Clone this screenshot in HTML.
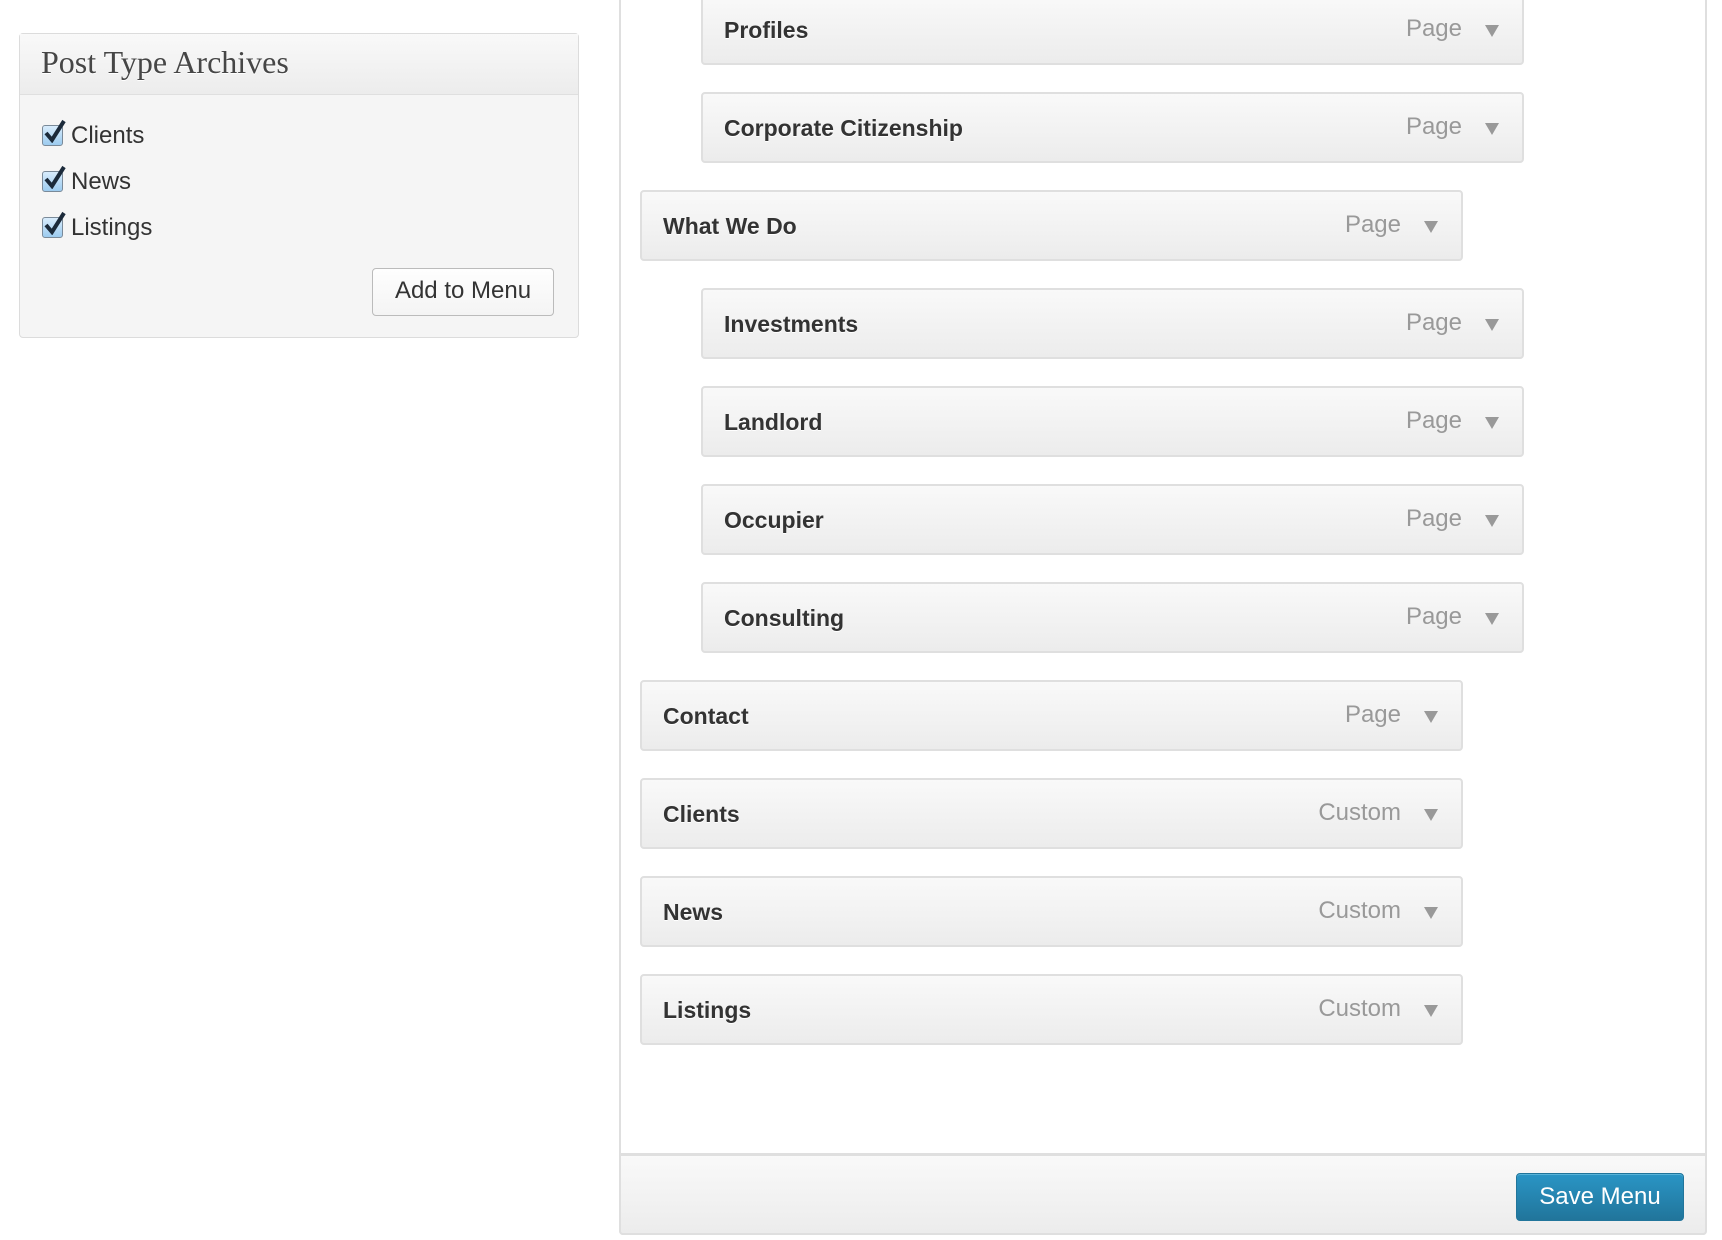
<!DOCTYPE html>
<html><head><meta charset="utf-8"><style>
*{box-sizing:border-box;margin:0;padding:0}
body{width:1722px;height:1240px;background:#fff;position:relative;overflow:hidden;font-family:"Liberation Sans",Arial,sans-serif}
.lp{position:absolute;left:19px;top:33px;width:560px;height:305px;border:1px solid #dcdcdc;border-radius:4px;background:#f5f5f5}
.lph{height:61px;border-bottom:1px solid #dfdfdf;background:linear-gradient(#f9f9f9,#ececec);font-family:"Liberation Serif",Georgia,serif;font-size:32px;color:#464646;padding:10px 0 0 21px;text-shadow:0 1px 0 #fff}
.cb{position:absolute;left:22px;font-size:24px;color:#333;height:24px;line-height:24px}
.cb i{position:absolute;left:0;top:1px;width:21px;height:21px;border:1px solid #7a8a99;border-radius:3px;background:linear-gradient(#d8ecfc,#9ccbef)}
.cb svg{position:absolute;left:2px;top:-5px}
.cb span{position:absolute;left:29px;top:0;white-space:nowrap}
.btn{position:absolute;left:352px;top:234px;width:182px;height:48px;border:1px solid #bbb;border-radius:4px;background:linear-gradient(#fefefe,#f4f4f4);font-size:24px;color:#333;text-align:center;line-height:44px}
.rp{position:absolute;left:619px;top:-5px;width:1088px;height:1240px;border:2px solid #dfdfdf;border-top:none;border-radius:0 0 4px 4px;background:#fff}
.ft{position:absolute;left:619px;top:1153px;width:1088px;height:82px;border:2px solid #dfdfdf;border-top:3px solid #dfdfdf;border-radius:0 0 4px 4px;background:linear-gradient(#f9f9f9,#ececec)}
.save{position:absolute;left:1516px;top:1173px;width:168px;height:48px;border:1px solid #21759b;border-radius:4px;background:linear-gradient(#2a95c5,#21759b);color:#fff;font-size:24px;text-align:center;line-height:46px;box-shadow:inset 0 1px 0 rgba(120,200,230,.6)}
.it{position:absolute;width:823px;height:71px;border:2px solid #dfdfdf;border-radius:4px;background:linear-gradient(#f9f9f9,#ececec)}
.it b{position:absolute;left:21px;top:21px;font-size:23px;color:#333;text-shadow:0 1px 0 #fff}
.it em{position:absolute;right:60px;top:19px;font-style:normal;font-size:24px;color:#999}
.it i{position:absolute;right:23px;top:29px;width:0;height:0;border-left:7px solid transparent;border-right:7px solid transparent;border-top:12px solid #999}
</style></head><body>
<div class="lp"><div class="lph">Post Type Archives</div>
<div class="cb" style="top:90px"><i></i><svg width="22" height="24" viewBox="0 0 22 24"><path d="M2 14 L8 21 L20 2" stroke="#1b2a3a" stroke-width="4" fill="none"/></svg><span>Clients</span></div>
<div class="cb" style="top:136px"><i></i><svg width="22" height="24" viewBox="0 0 22 24"><path d="M2 14 L8 21 L20 2" stroke="#1b2a3a" stroke-width="4" fill="none"/></svg><span>News</span></div>
<div class="cb" style="top:182px"><i></i><svg width="22" height="24" viewBox="0 0 22 24"><path d="M2 14 L8 21 L20 2" stroke="#1b2a3a" stroke-width="4" fill="none"/></svg><span>Listings</span></div>
<div class="btn">Add to Menu</div></div>
<div class="rp"></div>
<div class="it" style="left:701px;top:-6px"><b>Profiles</b><em>Page</em><i></i></div>
<div class="it" style="left:701px;top:92px"><b>Corporate Citizenship</b><em>Page</em><i></i></div>
<div class="it" style="left:640px;top:190px"><b>What We Do</b><em>Page</em><i></i></div>
<div class="it" style="left:701px;top:288px"><b>Investments</b><em>Page</em><i></i></div>
<div class="it" style="left:701px;top:386px"><b>Landlord</b><em>Page</em><i></i></div>
<div class="it" style="left:701px;top:484px"><b>Occupier</b><em>Page</em><i></i></div>
<div class="it" style="left:701px;top:582px"><b>Consulting</b><em>Page</em><i></i></div>
<div class="it" style="left:640px;top:680px"><b>Contact</b><em>Page</em><i></i></div>
<div class="it" style="left:640px;top:778px"><b>Clients</b><em>Custom</em><i></i></div>
<div class="it" style="left:640px;top:876px"><b>News</b><em>Custom</em><i></i></div>
<div class="it" style="left:640px;top:974px"><b>Listings</b><em>Custom</em><i></i></div>
<div class="ft"></div>
<div class="save">Save Menu</div>
</body></html>
